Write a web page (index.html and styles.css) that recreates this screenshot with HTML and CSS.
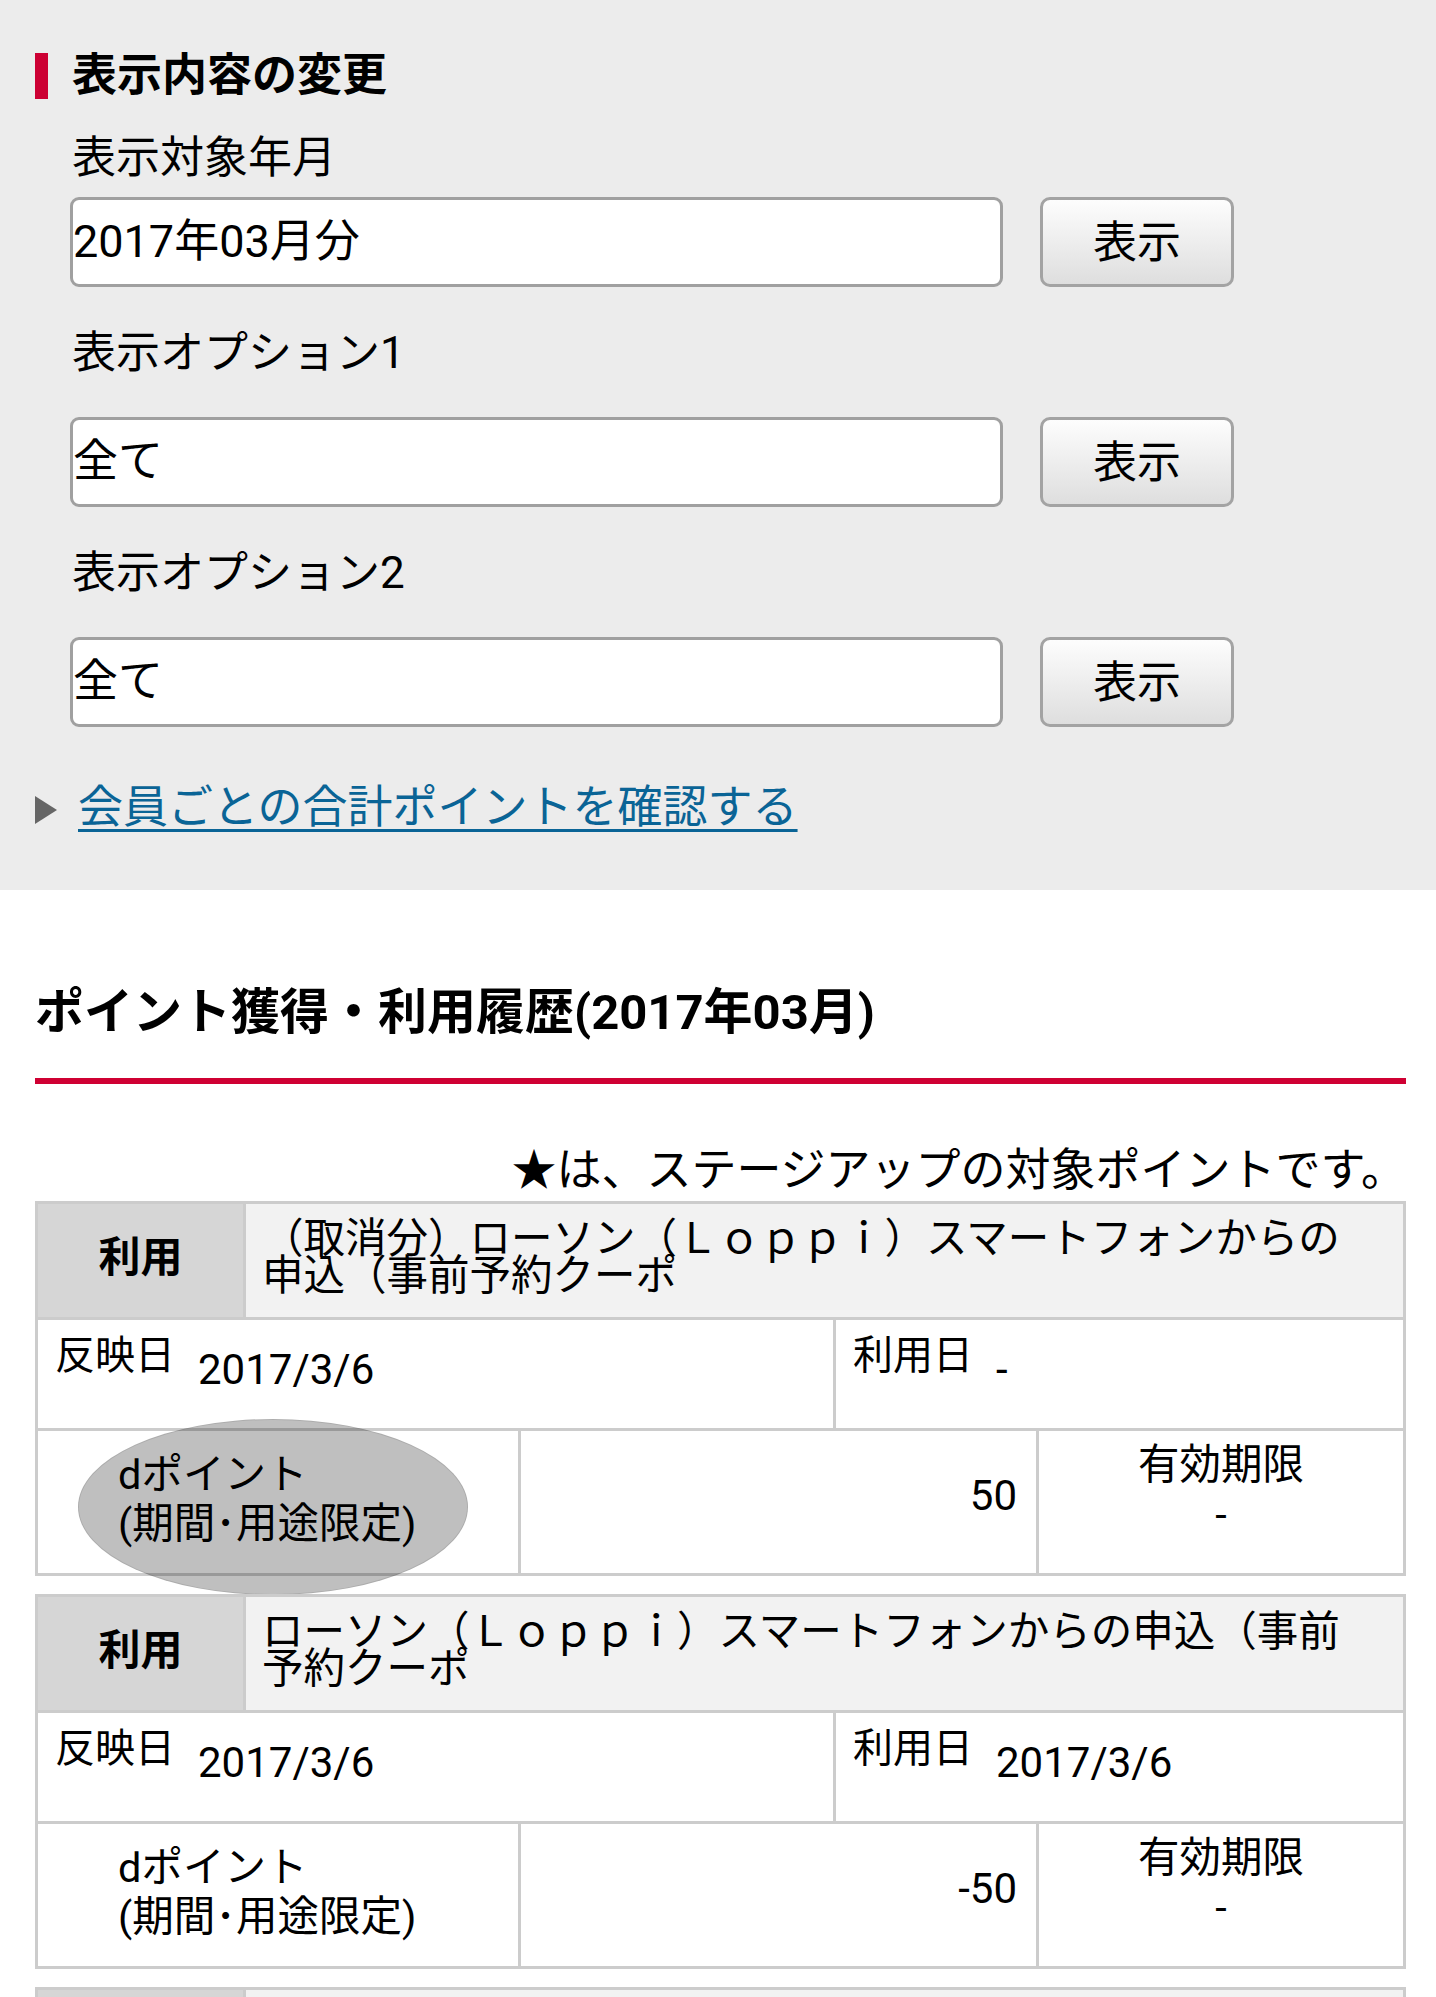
FILE: index.html
```html
<html>
<head>
    <title>ポイント獲得・利用履歴</title>
    <link rel="stylesheet" href="styles.css">
</head>
<body>
    <section class="settings">
        <h2 class="settings-title">表示内容の変更</h2>

        <div class="field field-first">
            <div class="field-label">表示対象年月</div>
            <div class="field-row">
                <div class="select">2017年03月分</div>
                <button type="button" class="btn">表示</button>
            </div>
        </div>
        <div class="field">
            <div class="field-label">表示オプション1</div>
            <div class="field-row">
                <div class="select">全て</div>
                <button type="button" class="btn">表示</button>
            </div>
        </div>
        <div class="field">
            <div class="field-label">表示オプション2</div>
            <div class="field-row">
                <div class="select">全て</div>
                <button type="button" class="btn">表示</button>
            </div>
        </div>

        <div class="more">
            <svg class="more-arrow" width="22" height="28" viewBox="0 0 22 28"><polygon points="0,0 22,14 0,28" fill="#666"/></svg>
            <a href="#" class="more-link">会員ごとの合計ポイントを確認する</a>
        </div>
    </section>

    <section class="history">
        <h2 class="history-title">ポイント獲得・利用履歴(2017年03月)</h2>
        <p class="history-note">★は、ステージアップの対象ポイントです。</p>

        <div class="item">
            <div class="item-head">
                <div class="item-type">利用</div>
                <div class="item-name">（取消分）ローソン（Ｌｏｐｐｉ）スマートフォンからの申込（事前予約クーポ</div>
            </div>
            <div class="item-dates">
                <div class="date-cell"><span class="date-label">反映日</span><span class="date-value">2017/3/6</span></div>
                <div class="date-cell"><span class="date-label">利用日</span><span class="date-value">-</span></div>
            </div>
            <div class="item-points">
                <div class="point-kind">dポイント<br>(期間･用途限定)</div>
                <div class="point-amount">50</div>
                <div class="point-limit">有効期限<br>-</div>
            </div>
            <div class="tap-highlight"></div>
        </div>

        <div class="item">
            <div class="item-head">
                <div class="item-type">利用</div>
                <div class="item-name">ローソン（Ｌｏｐｐｉ）スマートフォンからの申込（事前予約クーポ</div>
            </div>
            <div class="item-dates">
                <div class="date-cell"><span class="date-label">反映日</span><span class="date-value">2017/3/6</span></div>
                <div class="date-cell"><span class="date-label">利用日</span><span class="date-value">2017/3/6</span></div>
            </div>
            <div class="item-points">
                <div class="point-kind">dポイント<br>(期間･用途限定)</div>
                <div class="point-amount">-50</div>
                <div class="point-limit">有効期限<br>-</div>
            </div>
        </div>

        <div class="item">
            <div class="item-head">
                <div class="item-type"></div>
                <div class="item-name"></div>
            </div>
        </div>
    </section>
</body>
</html>
```

FILE: styles.css
```css
body {
    margin: 0;
    font-family: Roboto, "Noto Sans CJK JP", sans-serif;
    color: #000;
    background: #fff;
}

/* 表示内容の変更 */
.settings {
    background: #ececec;
    padding: 53px 0 52px 0;
}
.settings-title {
    margin: 0 0 0 35px;
    padding-left: 24px;
    border-left: 13px solid #cc0033;
    font-size: 45px;
    font-weight: bold;
    line-height: 46px;
}
.field {
    margin-left: 70px;
}
.field-label {
    padding-left: 2px;
    font-size: 44px;
    line-height: 60px;
    margin: 36px 0 34px 0;
}
.field-first .field-label {
    margin: 29px 0 9px 0;
}
.field-row {
    display: flex;
    gap: 37px;
}
.select {
    width: 927px;
    height: 84px;
    border: 3px solid #a0a0a0;
    border-radius: 9px;
    background: #fff;
    font-size: 45px;
    line-height: 84px;
}
.btn {
    width: 194px;
    height: 90px;
    border: 3px solid #a3a3a3;
    border-radius: 10px;
    background: linear-gradient(#fdfdfd, #dedede);
    font-family: Roboto, "Noto Sans CJK JP", sans-serif;
    font-size: 44px;
    color: #000;
    padding: 0 0 7px 0;
}
.more {
    display: flex;
    align-items: center;
    margin: 51px 0 0 35px;
    line-height: 60px;
}
.more-arrow {
    margin-right: 21px;
    margin-top: 4px;
}
.more-link {
    font-size: 45px;
    color: #0a6496;
    text-decoration-thickness: 3px;
    text-underline-offset: 6px;
}

/* 履歴 */
.history {
    padding: 0 30px 0 35px;
}
.history-title {
    margin: 93px 0 0 0;
    padding-bottom: 35px;
    border-bottom: 6px solid #cf0033;
    font-size: 49px;
    font-weight: bold;
    line-height: 60px;
}
.history-note {
    margin: 57px 0 0 0;
    text-align: right;
    font-size: 45px;
    line-height: 60px;
}
.item {
    position: relative;
    border: 3px solid #cccccc;
    margin-bottom: 18px;
}
.item-head {
    display: grid;
    grid-template-columns: 208px 1fr;
    height: 113px;
}
.item-type {
    display: flex;
    align-items: center;
    justify-content: center;
    background: #d6d6d6;
    border-right: 3px solid #cccccc;
    font-size: 42px;
    font-weight: bold;
    padding-bottom: 14px;
}
.item-name {
    display: flex;
    align-items: center;
    background: #f2f2f2;
    padding: 0 48px 8px 16px;
    font-size: 41.5px;
    line-height: 37px;
}
.item-dates {
    display: grid;
    grid-template-columns: 798px 1fr;
    height: 108px;
    border-top: 3px solid #cccccc;
}
.date-cell {
    display: flex;
    align-items: flex-start;
    padding-left: 17px;
}
.date-cell:first-child {
    border-right: 3px solid #cccccc;
}
.date-label {
    font-size: 40px;
    line-height: 48px;
    padding-top: 12px;
}
.date-value {
    font-size: 42px;
    line-height: 48px;
    padding-top: 26px;
    margin-left: 23px;
}
.item-points {
    display: grid;
    grid-template-columns: 483px 518px 1fr;
    height: 142px;
    border-top: 3px solid #cccccc;
}
.point-kind {
    display: flex;
    align-items: center;
    padding: 0 0 6px 80px;
    font-size: 41.5px;
    line-height: 49px;
    border-right: 3px solid #cccccc;
}
.point-amount {
    display: flex;
    align-items: center;
    justify-content: flex-end;
    padding: 0 19px 14px 0;
    font-size: 42px;
    border-right: 3px solid #cccccc;
}
.point-limit {
    text-align: center;
    padding-top: 9px;
    font-size: 41.5px;
    line-height: 50px;
}
.tap-highlight {
    position: absolute;
    left: 40px;
    top: 215px;
    width: 388px;
    height: 174px;
    border-radius: 50%;
    background: rgba(0, 0, 0, 0.25);
    border: 1px solid rgba(0, 0, 0, 0.1);
}
```
